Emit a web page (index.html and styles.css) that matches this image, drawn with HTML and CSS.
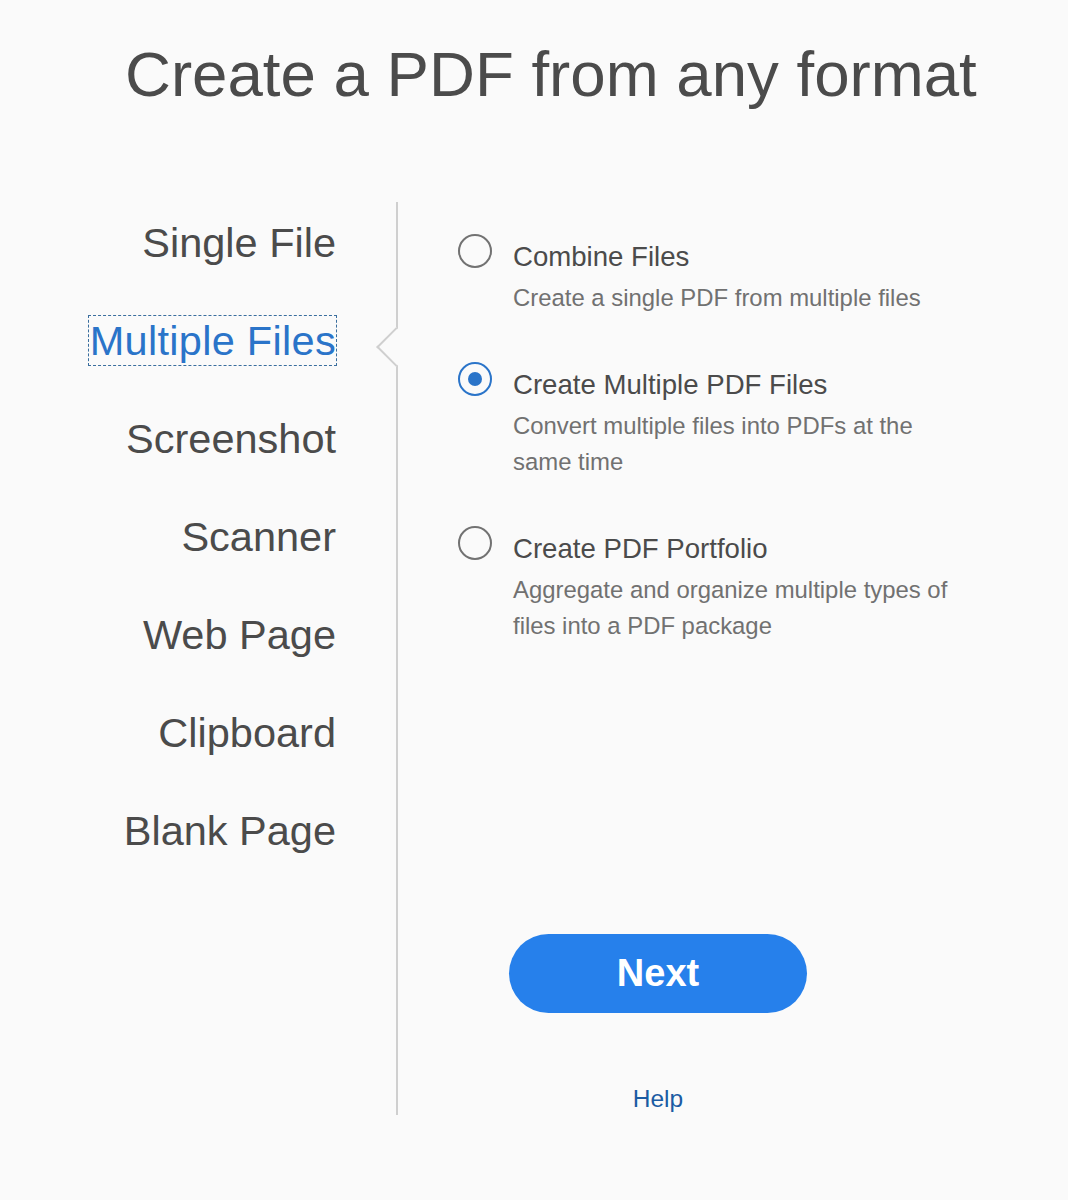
FILE: index.html
```html
<!DOCTYPE html>
<html lang="en">
<head>
<meta charset="utf-8">
<title>Create a PDF from any format</title>
<link rel="stylesheet" href="styles.css">
</head>
<body>
<div class="page">
  <h1 class="title">Create a PDF from any format</h1>
  <div class="columns">
    <nav class="nav">
      <div class="nav-item">Single File</div>
      <div class="nav-item selected">Multiple Files</div>
      <div class="nav-item">Screenshot</div>
      <div class="nav-item">Scanner</div>
      <div class="nav-item">Web Page</div>
      <div class="nav-item">Clipboard</div>
      <div class="nav-item">Blank Page</div>
    </nav>
    <section class="panel">
      <div class="options">
        <div class="option">
          <span class="radio"></span>
          <div class="option-text">
            <div class="option-title">Combine Files</div>
            <div class="option-desc">Create a single PDF from multiple files</div>
          </div>
        </div>
        <div class="option">
          <span class="radio checked"></span>
          <div class="option-text">
            <div class="option-title">Create Multiple PDF Files</div>
            <div class="option-desc">Convert multiple files into PDFs at the same time</div>
          </div>
        </div>
        <div class="option">
          <span class="radio"></span>
          <div class="option-text">
            <div class="option-title">Create PDF Portfolio</div>
            <div class="option-desc">Aggregate and organize multiple types of files into a PDF package</div>
          </div>
        </div>
      </div>
      <div class="actions">
        <button class="next">Next</button>
        <a class="help">Help</a>
      </div>
    </section>
  </div>
</div>
</body>
</html>
```

FILE: styles.css
```css
html, body {
  margin: 0;
  padding: 0;
  background: #fafafa;
}

body {
  font-family: "Liberation Sans", Arial, Helvetica, sans-serif;
  color: #4b4b4b;
}

.page {
  width: 1068px;
  height: 1200px;
}

.title {
  margin: 34px 0 0 125px;
  font-size: 63.6px;
  font-weight: normal;
  line-height: 80px;
  color: #4b4b4b;
  white-space: nowrap;
}

.columns {
  display: flex;
  margin-top: 88px;
}

.nav {
  width: 396px;
  box-sizing: border-box;
  padding: 15px 59px 0 0;
  display: flex;
  flex-direction: column;
  align-items: flex-end;
  gap: 47px;
}

.nav-item {
  font-size: 41.5px;
  line-height: 49px;
  border: 1px dashed transparent;
  padding: 0 0 0 1px;
  color: #4b4b4b;
  white-space: nowrap;
}

.nav-item.selected {
  color: #2a74c9;
  border-color: #3a6e9e;
  letter-spacing: 0.3px;
}

.panel {
  position: relative;
  height: 913px;
  border-left: 2px solid #cfcfcf;
  box-sizing: border-box;
  padding: 37px 0 0 60px;
  flex: 1;
}

.panel::before {
  content: "";
  position: absolute;
  left: -16px;
  top: 131px;
  width: 28px;
  height: 28px;
  box-sizing: border-box;
  background: #fafafa;
  border-left: 2px solid #cfcfcf;
  border-bottom: 2px solid #cfcfcf;
  transform: rotate(45deg);
}

.options {
  display: flex;
  flex-direction: column;
  gap: 51px;
}

.option {
  display: flex;
  align-items: flex-start;
  gap: 21px;
}

.radio {
  flex: none;
  width: 34px;
  height: 34px;
  margin-top: -5px;
  box-sizing: border-box;
  border: 2px solid #727272;
  border-radius: 50%;
  display: flex;
  align-items: center;
  justify-content: center;
  background: #fafafa;
}

.radio.checked {
  border-color: #2a74c9;
}

.radio.checked::after {
  content: "";
  width: 14px;
  height: 14px;
  border-radius: 50%;
  background: #2a74c9;
}

.option-text {
  width: 450px;
}

.option-title {
  font-size: 27.6px;
  line-height: 36px;
  color: #4b4b4b;
}

.option-desc {
  margin-top: 5px;
  font-size: 23.9px;
  line-height: 36px;
  color: #717171;
}

.actions {
  width: 298px;
  margin: 290px 0 0 51px;
  display: flex;
  flex-direction: column;
  align-items: center;
}

.next {
  width: 298px;
  height: 79px;
  border: none;
  border-radius: 40px;
  background: #2680eb;
  color: #ffffff;
  font-family: "Liberation Sans", Arial, Helvetica, sans-serif;
  font-weight: bold;
  font-size: 38px;
  padding: 0;
}

.help {
  margin-top: 71px;
  font-size: 24.5px;
  line-height: 30px;
  color: #1b5ba3;
}
```
